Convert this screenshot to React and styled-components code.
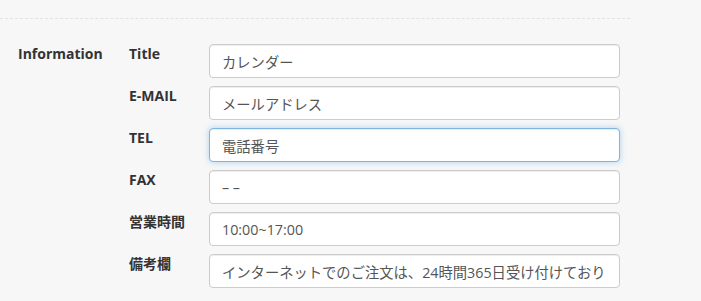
import React from "react";
import styled, { createGlobalStyle } from "styled-components";

const Global = createGlobalStyle`
  html, body { margin: 0; padding: 0; background: #f7f7f7; }
  body { font-family: "Open Sans", "Noto Sans CJK JP", sans-serif; color: #333; }
`;

const Page = styled.div`
  width: 701px;
  height: 301px;
  overflow: hidden;
  padding-top: 18px;
  box-sizing: border-box;
`;

const Divider = styled.div`
  width: 630px;
  border-top: 1px dashed #e2e2e2;
`;

const Section = styled.section`
  display: grid;
  grid-template-columns: 111px 1fr;
  padding: 25px 0 0 18px;
`;

const SectionTitle = styled.h3`
  margin: 0;
  padding-top: 1px;
  font-size: 14px;
  line-height: 18px;
  font-weight: 700;
  color: #333;
`;

const Fields = styled.div`
  display: flex;
  flex-direction: column;
  gap: 8px;
`;

const Row = styled.div`
  display: grid;
  grid-template-columns: 80px 411px;
  align-items: start;
`;

const Label = styled.label`
  font-size: 14px;
  line-height: 18px;
  padding-top: 1px;
  font-weight: 700;
  color: #333;
`;

const Input = styled.input`
  box-sizing: border-box;
  width: 411px;
  height: 34px;
  padding: 0 12px;
  font-family: "Open Sans", "Noto Sans CJK JP", sans-serif;
  font-size: 14.3px;
  color: #555;
  background: #fff;
  border: 1px solid ${(p) => (p.$focused ? "#7fb5e0" : "#cccccc")};
  border-radius: 4px;
  box-shadow: ${(p) =>
    p.$focused
      ? "inset 0 1px 1px rgba(0,0,0,.075), 0 0 6px rgba(102,175,233,.5)"
      : "inset 0 1px 1px rgba(0,0,0,.075)"};
  outline: none;
`;

const fields = [
  { label: "Title", value: "カレンダー" },
  { label: "E-MAIL", value: "メールアドレス" },
  { label: "TEL", value: "電話番号", focused: true },
  { label: "FAX", value: "– –" },
  { label: "営業時間", value: "10:00~17:00" },
  { label: "備考欄", value: "インターネットでのご注文は、24時間365日受け付けております。" },
];

export default function App() {
  return (
    <Page>
      <Global />
      <Divider />
      <Section>
        <SectionTitle>Information</SectionTitle>
        <Fields>
          {fields.map((f) => (
            <Row key={f.label}>
              <Label>{f.label}</Label>
              <Input defaultValue={f.value} $focused={f.focused} readOnly />
            </Row>
          ))}
        </Fields>
      </Section>
    </Page>
  );
}
